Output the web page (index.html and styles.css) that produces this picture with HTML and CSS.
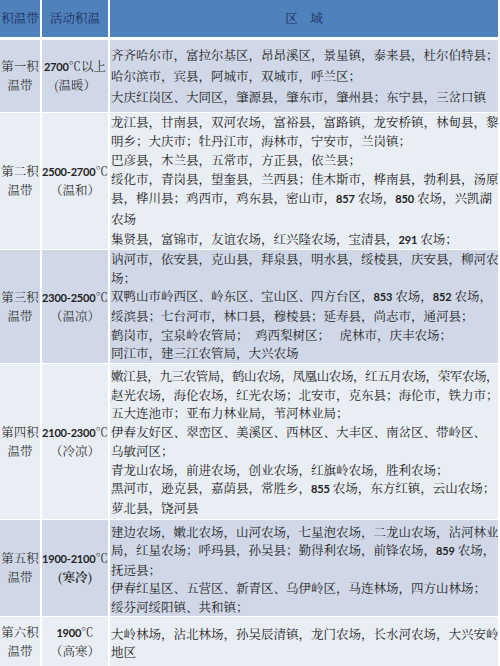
FILE: index.html
```html
<!DOCTYPE html>
<html lang="zh-CN">
<head>
<meta charset="utf-8">
<title>黑龙江省积温带划分</title>
<link rel="stylesheet" href="styles.css">
</head>
<body>
<table class="zones">
  <colgroup>
    <col class="w1">
    <col class="w2">
    <col class="w3">
  </colgroup>
  <thead>
    <tr>
      <th class="c1">积温带</th>
      <th class="c2">活动积温</th>
      <th class="c3h">区　域</th>
    </tr>
  </thead>
  <tbody>
    <tr class="r1 dark">
      <td class="c1"><div>第一积</div><div>温带</div></td>
      <td class="c2"><div><b class="num">2700</b>℃以上</div><div>(温暖）</div></td>
      <td class="c3">
        <div class="ln">齐齐哈尔市，富拉尔基区，昂昂溪区，景星镇，泰来县，杜尔伯特县；</div>
        <div class="ln">哈尔滨市，宾县，阿城市，双城市，呼兰区；</div>
        <div class="ln">大庆红岗区、大同区，肇源县，肇东市，肇州县；东宁县，三岔口镇</div>
      </td>
    </tr>
    <tr class="r2 light">
      <td class="c1"><div>第二积</div><div>温带</div></td>
      <td class="c2"><div><b class="num">2500-2700</b>℃</div><div>（温和）</div></td>
      <td class="c3">
        <div class="ln">龙江县，甘南县，双河农场，富裕县，富路镇，龙安桥镇，林甸县，黎</div>
        <div class="ln">明乡；大庆市；牡丹江市，海林市，宁安市，兰岗镇；</div>
        <div class="ln">巴彦县，木兰县，五常市，方正县，依兰县；</div>
        <div class="ln">绥化市，青岗县，望奎县，兰西县；佳木斯市，桦南县，勃利县，汤原</div>
        <div class="ln">县，桦川县；鸡西市，鸡东县，密山市，<b class="num">857</b> 农场，<b class="num">850</b> 农场，兴凯湖</div>
        <div class="ln tall">农场</div>
        <div class="ln">集贤县，富锦市，友谊农场，红兴隆农场，宝清县，<b class="num">291</b> 农场；</div>
      </td>
    </tr>
    <tr class="r3 dark">
      <td class="c1"><div>第三积</div><div>温带</div></td>
      <td class="c2"><div><b class="num">2300-2500</b>℃</div><div>（温凉）</div></td>
      <td class="c3">
        <div class="ln">讷河市，依安县，克山县，拜泉县，明水县，绥棱县，庆安县，柳河农</div>
        <div class="ln">场；</div>
        <div class="ln">双鸭山市岭西区、岭东区、宝山区、四方台区，<b class="num">853</b> 农场，<b class="num">852</b> 农场，</div>
        <div class="ln">绥滨县；七台河市，林口县，穆棱县；延寿县，尚志市，通河县；</div>
        <div class="ln">鹤岗市，宝泉岭农管局；  鸡西梨树区；   虎林市，庆丰农场；</div>
        <div class="ln">同江市，建三江农管局，大兴农场</div>
      </td>
    </tr>
    <tr class="r4 light">
      <td class="c1"><div>第四积</div><div>温带</div></td>
      <td class="c2"><div><b class="num">2100-2300</b>℃</div><div>（冷凉）</div></td>
      <td class="c3">
        <div class="ln tight">嫩江县，九三农管局，鹤山农场，凤凰山农场，红五月农场，荣军农场，</div>
        <div class="ln">赵光农场，海伦农场，红光农场；北安市，克东县；海伦市，铁力市；</div>
        <div class="ln">五大连池市；亚布力林业局，苇河林业局；</div>
        <div class="ln">伊春友好区、翠峦区、美溪区、西林区、大丰区、南岔区、带岭区、</div>
        <div class="ln">乌敏河区；</div>
        <div class="ln">青龙山农场，前进农场，创业农场，红旗岭农场，胜利农场；</div>
        <div class="ln">黑河市，逊克县，嘉荫县，常胜乡，<b class="num">855</b> 农场，东方红镇，云山农场；</div>
        <div class="ln">萝北县，饶河县</div>
      </td>
    </tr>
    <tr class="r5 dark">
      <td class="c1"><div>第五积</div><div>温带</div></td>
      <td class="c2"><div><b class="num">1900-2100</b>℃</div><div class="bold">(寒冷)</div></td>
      <td class="c3">
        <div class="ln">建边农场，嫩北农场，山河农场，七星泡农场，二龙山农场，沾河林业</div>
        <div class="ln">局，红星农场；呼玛县，孙吴县；勤得利农场，前锋农场，<b class="num">859</b> 农场，</div>
        <div class="ln">抚远县；</div>
        <div class="ln">伊春红星区、五营区、新青区、乌伊岭区，马连林场，四方山林场；</div>
        <div class="ln">绥芬河绥阳镇、共和镇；</div>
      </td>
    </tr>
    <tr class="r6 light">
      <td class="c1"><div>第六积</div><div>温带</div></td>
      <td class="c2"><div><b class="num">1900</b>℃</div><div>（高寒）</div></td>
      <td class="c3">
        <div class="ln">大岭林场，沾北林场，孙吴辰清镇，龙门农场，长水河农场，大兴安岭</div>
        <div class="ln">地区</div>
      </td>
    </tr>
  </tbody>
</table>
</body>
</html>
```

FILE: styles.css
```css
html, body {
  margin: 0;
  padding: 0;
  background: #ffffff;
}

body {
  font-family: "Noto Serif CJK SC", "Noto Sans CJK SC", sans-serif;
  font-size: 12.5px;
  color: #222222;
}

.zones {
  width: 498px;
  table-layout: fixed;
  border-collapse: separate;
  border-spacing: 0;
}

.w1 { width: 42px; }
.w2 { width: 68px; }
.w3 { width: 388px; }

.zones th,
.zones td {
  padding: 0;
  border-right: 2px solid #ffffff;
  border-bottom: 1px solid #ffffff;
}

.zones th {
  height: 37px;
  background: #4f81bd;
  color: #1b2f5c;
  font-weight: normal;
  text-align: center;
  vertical-align: middle;
  line-height: 37px;
  border-bottom: 3px solid #ffffff;
  white-space: nowrap;
  overflow: hidden;
}

.zones th.c3h,
.zones td.c3 {
  border-right: 0;
}

.dark td { background: #d0d8e8; }
.light td { background: #e9edf4; }

.c1,
.c2 {
  text-align: center;
  vertical-align: middle;
  line-height: 19px;
  white-space: nowrap;
  color: #333333;
}

.c3 {
  vertical-align: top;
  text-align: left;
  white-space: nowrap;
  overflow: hidden;
}

.zones td.c3 { padding-left: 1px; }

.ln { white-space: pre; }

.ln.tight { letter-spacing: -0.4px; }

.num {
  font-family: "Lato", "Liberation Sans", sans-serif;
  font-weight: 700;
  font-size: 11px;
  letter-spacing: -0.2px;
  color: #222222;
}

.bold { font-weight: 700; }

.r1 td.c3 { padding-top: 4.5px; padding-bottom: 4.5px; line-height: 21px; }
.r2 td.c3 { line-height: 19px; }
.r2 .ln.tall { line-height: 22px; }
.r3 td.c3 { line-height: 18.67px; }
.r4 td.c3 { padding-top: 3px; padding-bottom: 1.4px; line-height: 18.7px; }
.r5 td.c3 { padding-top: 2.5px; line-height: 18.5px; }
.r6 td.c3 { padding-top: 8px; padding-bottom: 5px; line-height: 18px; }
```
